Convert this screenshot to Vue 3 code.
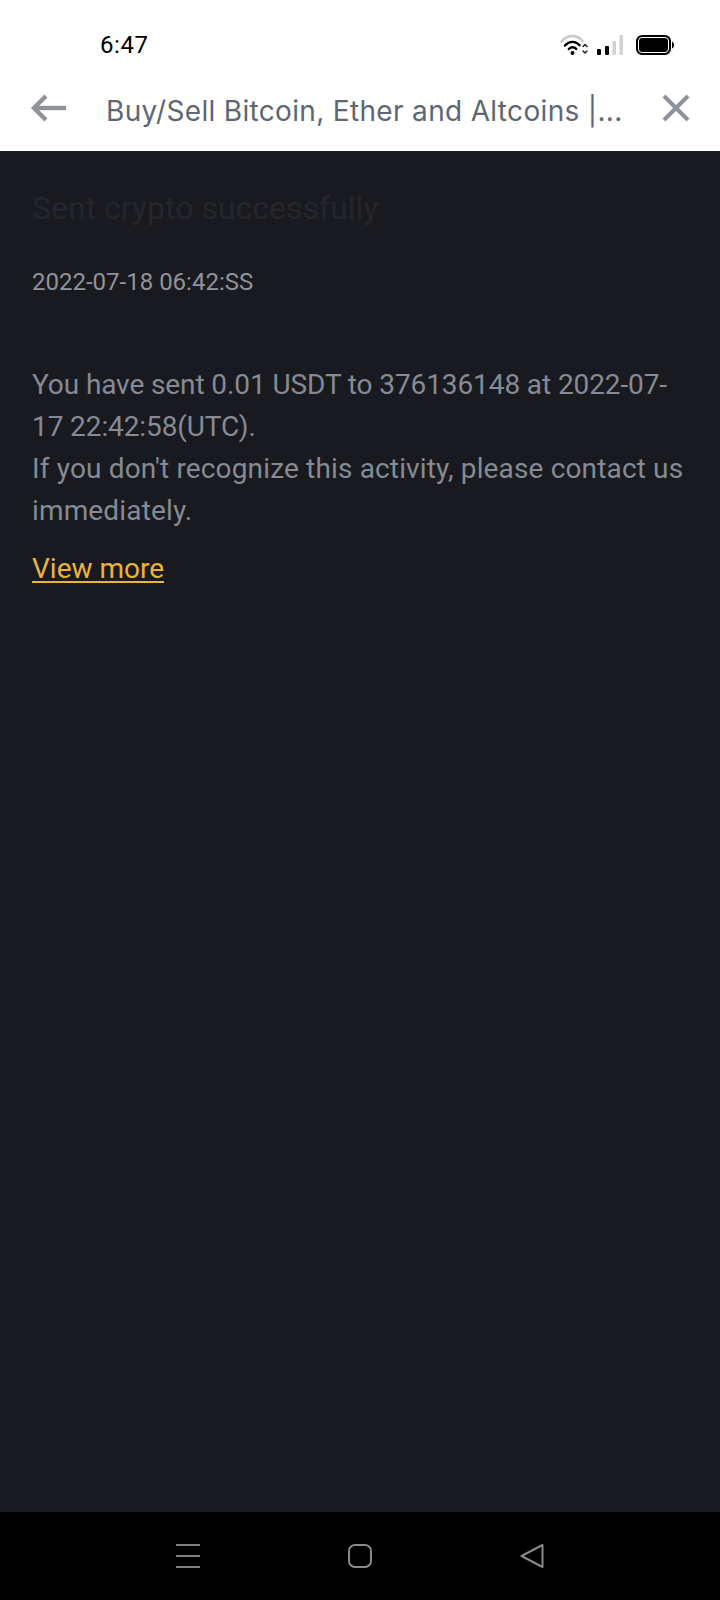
<template>
  <div class="screen">
    <header class="top">
      <div class="status">
        <span class="clock">6:47</span>
        <div class="status-icons">
          <svg class="wifi" width="28" height="22" viewBox="0 0 28 22" fill="none" stroke-linecap="round">
            <path d="M1.500 7.500C5 3.500 9 2 12.500 2s7 1.500 10 5" stroke="#c9c9c9" stroke-width="2.400" />
            <path d="M5 11.500c2.200-2.400 4.800-3.600 7.600-3.600 2.600 0 5 1.200 7 3.400" stroke="#000" stroke-width="2.400" />
            <path d="M8.800 15c1.200-1.200 2.500-1.800 3.900-1.800 1.300 0 2.500.6 3.500 1.600" stroke="#000" stroke-width="2.400" />
            <circle cx="12.500" cy="19" r="2" fill="#000" />
            <path d="M23 12.500l2-2 2 2M23 17l2 2 2-2" stroke="#222" stroke-width="1.500" />
          </svg>
          <svg class="signal" width="26" height="20" viewBox="0 0 26 20">
            <rect x="0" y="14" width="4" height="6" rx="1" fill="#000" />
            <rect x="8" y="11" width="4" height="9" rx="1" fill="#000" />
            <rect x="15.500" y="6" width="3.500" height="14" rx="1" fill="#d2d2d2" />
            <rect x="22.500" y="0" width="3.500" height="20" rx="1" fill="#d2d2d2" />
          </svg>
          <svg class="battery" width="38" height="20" viewBox="0 0 38 20">
            <rect x="1" y="1" width="33" height="18" rx="5" fill="#000" stroke="#000" stroke-width="2" />
            <rect x="2.500" y="2.500" width="30" height="15" rx="3.500" fill="#000" stroke="#fff" stroke-width="1" />
            <path d="M36 6.500c1.200.5 2 1.800 2 3.500s-.8 3-2 3.500z" fill="#000" />
          </svg>
        </div>
      </div>
      <div class="nav">
        <svg class="back" width="36" height="28" viewBox="0 0 36 28" fill="none" stroke="#8f929a" stroke-width="4.400">
          <path d="M36 14H4" />
          <path d="M16 2L4 14l12 12" />
        </svg>
        <div class="title">Buy/Sell Bitcoin, Ether and Altcoins |...</div>
        <svg class="close" width="28" height="28" viewBox="0 0 28 28" fill="none" stroke="#8f929f" stroke-width="4.200">
          <path d="M2 2l24 24M26 2L2 26" />
        </svg>
      </div>
    </header>

    <main class="content">
      <h1 class="heading">Sent crypto successfully</h1>
      <div class="date">2022-07-18 06:42:SS</div>
      <div class="body">
        <div class="line">You have sent 0.01 USDT to 376136148 at 2022-07-</div>
        <div class="line">17 22:42:58(UTC).</div>
        <div>If you don't recognize this activity, please contact us</div>
        <div>immediately.</div>
      </div>
      <a class="more" href="#">View more</a>
    </main>

    <footer class="softkeys">
      <svg width="24" height="24" viewBox="0 0 24 24" stroke="#7f7f7f" stroke-width="2">
        <path d="M0 1h24M0 12h24M0 23h24" />
      </svg>
      <svg width="24" height="24" viewBox="0 0 24 24" fill="none" stroke="#8a8a8a" stroke-width="2">
        <rect x="1" y="1" width="22" height="22" rx="6" />
      </svg>
      <svg width="24" height="24" viewBox="0 0 24 24" fill="none" stroke="#8a8a8a" stroke-width="2" stroke-linejoin="round">
        <path d="M1.500 12L22.500 1v22z" />
      </svg>
    </footer>
  </div>
</template>

<script setup>
</script>

<style scoped>
.screen {
  width: 720px;
  height: 1600px;
  display: flex;
  flex-direction: column;
  background: #191a1f;
  font-family: "Roboto", sans-serif;
  overflow: hidden;
}
.top {
  height: 151px;
  flex: none;
  background: #fff;
}
.status {
  height: 76px;
  display: flex;
  align-items: center;
  justify-content: space-between;
  padding: 14px 46px 0 100px;
  box-sizing: border-box;
}
.clock {
  font-size: 24px;
  color: #000;
  letter-spacing: 0.6px;
}
.status-icons {
  display: flex;
  align-items: center;
  gap: 9px;
}
.battery {
  margin-left: 4px;
}
.nav {
  display: flex;
  align-items: center;
  box-sizing: border-box;
  height: 70px;
  padding: 0 30px 4px;
  border-bottom: 1px solid #f4f4f4;
}
.back,
.close {
  flex: none;
  margin-bottom: 2px;
}
.title {
  flex: 1;
  margin: 4px 0 0 40px;
  font-family: "Inter", "Roboto", sans-serif;
  font-size: 28px;
  letter-spacing: 0.33px;
  color: #5e6673;
  white-space: nowrap;
}
.content {
  flex: 1;
  padding: 38px 32px 0;
}
.heading {
  margin: 0;
  font-size: 32px;
  font-weight: 400;
  line-height: 38px;
  color: #25262c;
}
.date {
  margin-top: 41px;
  font-size: 24px;
  line-height: 28px;
  color: #90939b;
}
.body {
  margin: 68px 0 0;
  font-size: 28px;
  line-height: 42px;
  letter-spacing: 0.15px;
  color: #858a95;
  white-space: nowrap;
}
.line {
  letter-spacing: -0.1px;
}
.more {
  display: inline-block;
  margin-top: 20px;
  font-size: 28px;
  line-height: 34px;
  color: #e9b43c;
  text-underline-offset: 3px;
}
.softkeys {
  height: 88px;
  flex: none;
  background: #000;
  display: flex;
  align-items: center;
  justify-content: center;
  gap: 148px;
}
</style>
<style>
body { margin: 0; background: #191a1f; }
</style>
